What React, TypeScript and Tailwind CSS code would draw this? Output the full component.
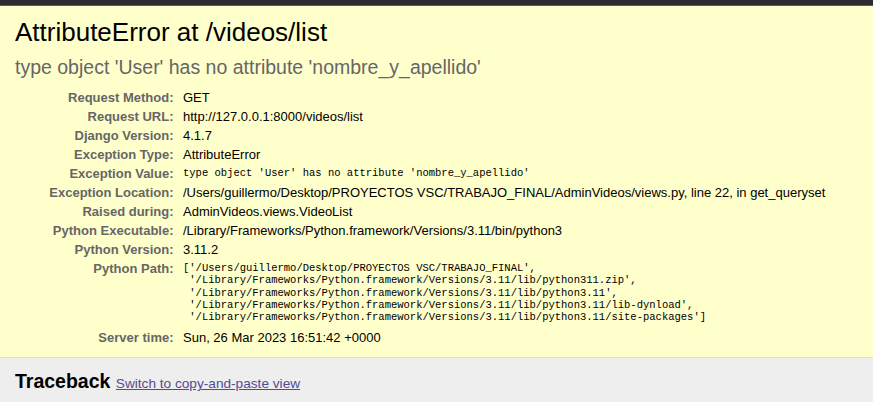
const meta: { label: string; value: string; mono?: boolean }[] = [
  { label: "Request Method:", value: "GET" },
  { label: "Request URL:", value: "http://127.0.0.1:8000/videos/list" },
  { label: "Django Version:", value: "4.1.7" },
  { label: "Exception Type:", value: "AttributeError" },
  {
    label: "Exception Value:",
    value: "type object 'User' has no attribute 'nombre_y_apellido'",
    mono: true,
  },
  {
    label: "Exception Location:",
    value:
      "/Users/guillermo/Desktop/PROYECTOS VSC/TRABAJO_FINAL/AdminVideos/views.py, line 22, in get_queryset",
  },
  { label: "Raised during:", value: "AdminVideos.views.VideoList" },
  {
    label: "Python Executable:",
    value: "/Library/Frameworks/Python.framework/Versions/3.11/bin/python3",
  },
  { label: "Python Version:", value: "3.11.2" },
  {
    label: "Python Path:",
    value: `['/Users/guillermo/Desktop/PROYECTOS VSC/TRABAJO_FINAL',
 '/Library/Frameworks/Python.framework/Versions/3.11/lib/python311.zip',
 '/Library/Frameworks/Python.framework/Versions/3.11/lib/python3.11',
 '/Library/Frameworks/Python.framework/Versions/3.11/lib/python3.11/lib-dynload',
 '/Library/Frameworks/Python.framework/Versions/3.11/lib/python3.11/site-packages']`,
    mono: true,
  },
  { label: "Server time:", value: "Sun, 26 Mar 2023 16:51:42 +0000" },
];

export default function App() {
  return (
    <div className="min-h-screen bg-[#eeeeee] font-['Liberation_Sans',Arial,sans-serif] text-[13px] text-black">
      <div className="h-[6px] bg-[#2c2b30] border-b border-[#5a5a5e]" />

      <div className="bg-[#ffffcc] border-b border-[#dddddd] px-[15px] pt-[11px] pb-[10px]">
        <h1 className="text-[26px] leading-[30px] font-normal">AttributeError at /videos/list</h1>
        <h2 className="mt-[9px] text-[19.5px] leading-[22px] font-normal text-[#666666]">
          type object 'User' has no attribute 'nombre_y_apellido'
        </h2>

        <div className="mt-[10px] grid grid-cols-[165px_1fr]">
          {meta.map((row) => (
            <div key={row.label} className="contents">
              <div className="text-right font-bold text-[#666666] pr-[6.5px] py-[2px] leading-[15px]">
                {row.label}
              </div>
              <div className="pl-[3px] py-[2px] leading-[15px]">
                {row.mono ? (
                  <pre
                    className={
                      "font-['Liberation_Mono','Courier_New',monospace] text-[10.5px] whitespace-pre " +
                      (row.label === "Python Path:" ? "leading-[12.3px] pt-[1px] pb-[3px]" : "leading-[15px]")
                    }
                  >
                    {row.value}
                  </pre>
                ) : (
                  row.value
                )}
              </div>
            </div>
          ))}
        </div>
      </div>

      <div className="px-[15px] pt-[12px] pb-[10px]">
        <h2 className="text-[19.5px] leading-[22px] font-bold">
          Traceback{" "}
          <span className="text-[13.65px] font-normal">
            <a href="#" className="text-[#524b94] underline">
              Switch to copy-and-paste view
            </a>
          </span>
        </h2>
      </div>
    </div>
  );
}
